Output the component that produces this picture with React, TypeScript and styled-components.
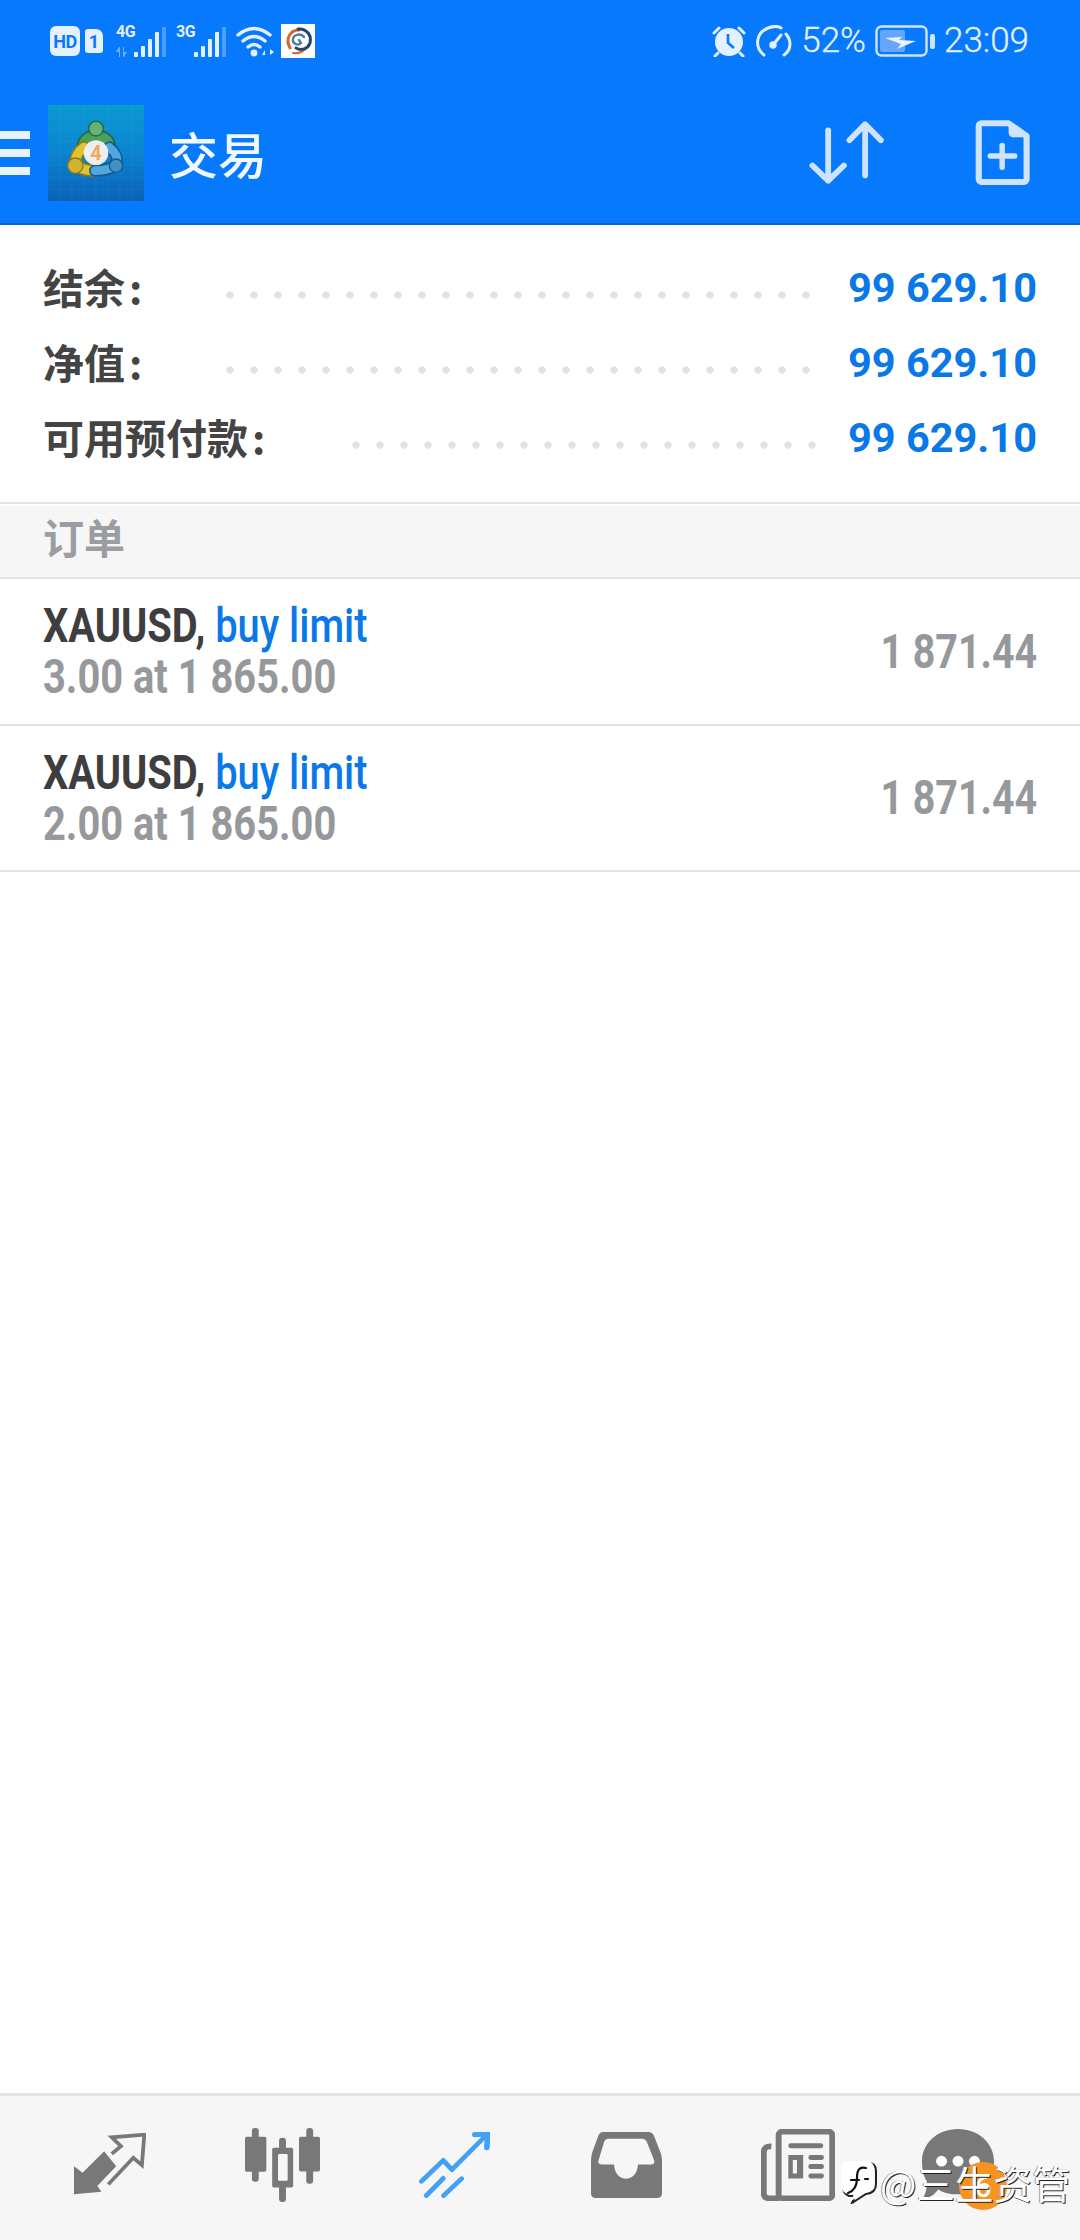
import React from "react";
import styled, { createGlobalStyle } from "styled-components";

const GlobalStyle = createGlobalStyle`
  html, body {
    margin: 0;
    padding: 0;
    background: #fff;
  }
  body {
    font-family: Roboto, "Noto Sans CJK SC", sans-serif;
  }
`;

const Page = styled.div`
  position: relative;
  width: 1080px;
  height: 2240px;
  display: flex;
  flex-direction: column;
  overflow: hidden;
  background: #fff;
`;

const Header = styled.header`
  background: #0679fd;
  border-bottom: 2px solid #0a66cc;
  height: 223px;
  flex: none;
`;

const StatusBar = styled.div`
  height: 82px;
  display: flex;
  align-items: center;
  justify-content: space-between;
  padding: 0 51px 0 50px;
`;

const StatusGroup = styled.div<{ $gap: number; $indent?: number }>`
  display: flex;
  align-items: center;
  gap: ${(p) => p.$gap}px;
  margin-left: ${(p) => p.$indent ?? 0}px;
`;

const HdBadge = styled.span`
  width: 30px;
  height: 30px;
  border-radius: 6px;
  background: #e5f0ff;
  color: #0679fd;
  font-size: 18px;
  font-weight: 700;
  display: flex;
  align-items: center;
  justify-content: center;
  letter-spacing: -0.5px;
`;

const SimBadge = styled.span`
  width: 18px;
  height: 24px;
  border-radius: 3px 7px 3px 3px;
  background: #e5f0ff;
  color: #0679fd;
  font-size: 18px;
  font-weight: 700;
  display: flex;
  align-items: center;
  justify-content: center;
`;

const SignalBox = styled.div`
  position: relative;
  width: 50px;
  height: 32px;
  display: flex;
  align-items: flex-end;
  justify-content: flex-end;
  gap: 3px;
`;

const NetLabel = styled.span`
  position: absolute;
  left: 0;
  top: -1px;
  color: #e5f0ff;
  font-size: 16px;
  line-height: 16px;
  font-weight: 700;
  letter-spacing: -0.4px;
`;

const NetArrows = styled.svg`
  position: absolute;
  left: 0;
  bottom: 0;
`;

const SignalBar = styled.i<{ $h: number; $dim?: boolean }>`
  display: block;
  width: 4px;
  height: ${(p) => p.$h}px;
  background: ${(p) => (p.$dim ? "#4c9dfc" : "#e5f0ff")};
  border-radius: 1px;
`;

const AppBadge = styled.span`
  width: 34px;
  height: 34px;
  background: #fff;
  display: block;
`;

const StatusText = styled.span`
  color: #e5f0ff;
  font-size: 35px;
  line-height: 36px;
  font-weight: 300;
  -webkit-text-stroke: 0.3px #e5f0ff;
`;

const Toolbar = styled.div`
  height: 141px;
  display: flex;
  align-items: center;
`;

const Burger = styled.div`
  width: 30px;
  display: flex;
  flex-direction: column;
  gap: 10px;
  margin-right: 18px;
`;

const BurgerLine = styled.i`
  display: block;
  height: 8px;
  background: #e8f3ff;
`;

const Title = styled.h1`
  margin: 0 0 0 25px;
  color: #f2f8ff;
  font-size: 49px;
  font-weight: 500;
  font-family: "Noto Sans CJK SC", sans-serif;
  line-height: 60px;
  flex: 1;
`;

const ToolIcons = styled.div`
  display: flex;
  align-items: center;
  gap: 90px;
  padding-right: 50px;
`;

const Summary = styled.section`
  padding: 24px 0 28px;
  flex: none;
`;

const SummaryRow = styled.div`
  height: 75px;
  display: flex;
  align-items: center;
  padding: 0 43px;
`;

const SummaryLabel = styled.span`
  font-family: "Noto Sans CJK SC", sans-serif;
  font-size: 41px;
  font-weight: 700;
  color: #444;
  line-height: 50px;
  white-space: nowrap;
  margin-bottom: 2px;
`;

const Colon = styled.span`
  margin-left: 4px;
`;

const Leader = styled.span<{ $dots: number; $lead: number }>`
  flex: none;
  width: ${(p) => p.$dots * 24}px;
  height: 8px;
  margin: 16px auto 0 ${(p) => p.$lead}px;
  background-image: radial-gradient(circle at 4px 4px, #e2e2e2 3.4px, transparent 4px);
  background-size: 24px 8px;
  background-repeat: repeat-x;
`;

const SummaryValue = styled.span`
  font-size: 41.5px;
  font-weight: 700;
  color: #0a78e6;
  line-height: 50px;
  white-space: nowrap;
  margin-top: 2px;
`;

const SectionHead = styled.div`
  flex: none;
  height: 77px;
  box-sizing: border-box;
  border-top: 2px solid #e4e4e4;
  border-bottom: 2px solid #e4e4e4;
  box-shadow: inset 0 2px 0 #fff;
  background: #f6f6f6;
  padding: 0 43px 10px;
  display: flex;
  align-items: center;
  font-family: "Noto Sans CJK SC", sans-serif;
  font-size: 41px;
  font-weight: 700;
  color: #9a9da1;
`;

const OrderRow = styled.div`
  flex: none;
  height: 144.5px;
  border-bottom: 2px solid #e4e4e4;
  padding: 0 43px;
  display: flex;
  align-items: center;
  justify-content: space-between;
`;

const OrderInfo = styled.div`
  display: flex;
  flex-direction: column;
`;

const CondensedLine = styled.div<{ $muted?: boolean }>`
  font-size: 48px;
  line-height: 51px;
  height: 51px;
  font-weight: 700;
  white-space: nowrap;
  transform: scaleX(0.83);
  transform-origin: left center;
  color: ${(p) => (p.$muted ? "#96989c" : "#3e3e40")};
`;

const OrderType = styled.span`
  color: #0a78e6;
  font-weight: 500;
`;

const OrderPrice = styled.div`
  font-size: 48px;
  font-weight: 700;
  color: #96989c;
  white-space: nowrap;
  transform: scaleX(0.82);
  transform-origin: right center;
`;

const Spacer = styled.div`
  flex: 1;
`;

const BottomNav = styled.nav`
  flex: none;
  height: 147px;
  border-top: 3px solid #e4e4e4;
  background: #f6f6f6;
  box-sizing: border-box;
  display: grid;
  grid-template-columns: repeat(5, 172px) 148px;
  padding: 0 0 7px 24px;
`;

const NavItem = styled.div`
  position: relative;
  display: flex;
  align-items: center;
  justify-content: center;
`;

const Badge = styled.span`
  position: absolute;
  left: 75px;
  top: 66px;
  width: 48px;
  height: 48px;
  border-radius: 50%;
  background: #f7931e;
  color: #fff;
  font-size: 30px;
  font-weight: 500;
  display: flex;
  align-items: center;
  justify-content: center;
`;

const Watermark = styled.div`
  position: absolute;
  left: 840px;
  top: 2158px;
  display: flex;
  align-items: center;
  gap: 2px;
  color: #fff;
  font-family: "Noto Sans CJK SC", sans-serif;
  font-size: 38.5px;
  line-height: 48px;
  text-shadow: 1px 1px 0 #222, -1px 0 0 #999;
  white-space: nowrap;
`;

const gray = "#787878";
const pale = "#cfe3ff";

const SignalGroup = ({ label, arrows }: { label: string; arrows?: boolean }) => (
  <SignalBox>
    <NetLabel>{label}</NetLabel>
    {arrows && (
      <NetArrows width="16" height="10" viewBox="0 0 16 10" fill="#6fb0fd">
        <path d="M0 5 L3 0 H4 V10 H3 V5 Z M7 0 H8 V5 L11 5 L8 10 H7 Z" />
      </NetArrows>
    )}
    <SignalBar $h={5} />
    <SignalBar $h={11} />
    <SignalBar $h={18} />
    <SignalBar $h={25} />
    <SignalBar $h={30} $dim />
  </SignalBox>
);

const WifiIcon = () => (
  <svg width="40" height="32" viewBox="0 0 40 32" fill="none" stroke="#e5f0ff" strokeLinecap="round">
    <path d="M2 10 Q18 -3 34 10" strokeWidth="3.4" />
    <path d="M7 16 Q18 7 29 16" strokeWidth="3.4" />
    <path d="M12 22 Q18 17 24 22" strokeWidth="3.4" />
    <circle cx="18" cy="28" r="3.4" fill="#e5f0ff" stroke="none" />
    <path d="M29 30 L29 25 L26 30 Z M34 24 L34 30 L38 27 Z" fill="#e5f0ff" stroke="none" />
  </svg>
);

const SwirlIcon = () => (
  <svg width="34" height="34" viewBox="0 0 34 34" fill="none" strokeLinecap="round" style={{ display: "block" }}>
    <path d="M9 24 C4 15 9 6 18 6" stroke="#d8662a" strokeWidth="3" />
    <path d="M12 29 C18 30 24 27 27 22" stroke="#d8662a" strokeWidth="2" />
    <path d="M17 5 C26 4 31 12 29 19 C27 25 20 27 15 24" stroke="#24456f" strokeWidth="3" />
    <path d="M23 13 C20 9 13 10 12 15 C11 20 17 22 20 19 L18 16" stroke="#4a7fa8" strokeWidth="2.4" />
  </svg>
);

const AlarmIcon = () => (
  <svg width="34" height="32" viewBox="0 0 34 32" fill="none">
    <circle cx="17" cy="17" r="14" fill="#e5f0ff" />
    <path d="M16 9 V18 L22 23" stroke="#0679fd" strokeWidth="2.6" />
    <path d="M2 8 L7 3 M32 8 L27 3 M6 28 L3 31 M28 28 L31 31" stroke="#e5f0ff" strokeWidth="3" strokeLinecap="round" />
  </svg>
);

const GaugeIcon = () => (
  <svg width="37" height="32" viewBox="0 0 37 32" fill="none" stroke="#e5f0ff" strokeWidth="3" strokeLinecap="round">
    <path d="M9 30 C-1 22 1 8 13 3 C18 1 23 1 26 3" />
    <path d="M31 9 C37 16 36 25 29 30" />
    <path d="M18 20 L26 10" />
    <circle cx="18" cy="20" r="2.2" fill="#e5f0ff" />
  </svg>
);

const BatteryIcon = () => (
  <svg width="60" height="32" viewBox="0 0 60 32" fill="none">
    <rect x="1.5" y="1.5" width="50" height="29" rx="5" stroke="#cfe3ff" strokeWidth="2.4" />
    <rect x="5" y="5" width="25" height="22" rx="2" fill="#64a6fb" />
    <path d="M10 13 L27 12 L24 15 L41 16 L22 24 L26 19 Z" fill="#eaf3ff" />
    <rect x="55" y="9" width="5" height="15" rx="2" fill="#cfe3ff" />
  </svg>
);

const SortIcon = () => (
  <svg width="76" height="63" viewBox="388 362 222 190" fill="none" preserveAspectRatio="none" stroke={pale} strokeWidth="17" strokeLinecap="round" strokeLinejoin="round">
    <path d="M444 390 V542 M398 496 L444 542 L490 496" />
    <path d="M552 526 V372 M506 420 L552 372 L598 420" />
  </svg>
);

const NewDocIcon = () => (
  <svg width="55" height="66" viewBox="885 360 162 198" fill="none" preserveAspectRatio="none">
    <path d="M896 378 a8 8 0 0 1 8 -8 H984 L1037 408 V538 a8 8 0 0 1 -8 8 H904 a8 8 0 0 1 -8 -8 Z" stroke={pale} strokeWidth="18" strokeLinejoin="round" />
    <path d="M984 368 L1046 412 H1000 a14 14 0 0 1 -16 -14 Z" fill={pale} />
    <path d="M965 436 V502 M930 468 H1002" stroke={pale} strokeWidth="16" strokeLinecap="round" />
  </svg>
);

const Mt4Logo = () => (
  <svg width="96" height="96" viewBox="144 315 288 288" fill="none" strokeLinecap="round" style={{ display: "block" }}>
    <defs>
      <linearGradient id="mtBg" x1="0" y1="0" x2="0" y2="1">
        <stop offset="0" stopColor="#0a9ad0" />
        <stop offset="0.5" stopColor="#0b83d2" />
        <stop offset="1" stopColor="#0a62b8" />
      </linearGradient>
    </defs>
    <rect x="144" y="315" width="288" height="288" fill="url(#mtBg)" />
    {[1, 2, 3, 4, 5, 6, 7].map((i) => (
      <g key={i} stroke="#ffffff" strokeOpacity="0.08" strokeWidth="2">
        <line x1={144 + i * 36} y1="315" x2={144 + i * 36} y2="603" />
        <line x1="144" y1={315 + i * 36} x2="432" y2={315 + i * 36} />
      </g>
    ))}
    <path d="M250 440 C250 398 326 398 328 440" stroke="#1d6a48" strokeWidth="40" />
    <path d="M250 440 C250 398 326 398 328 440" stroke="#4ba05e" strokeWidth="30" />
    <path d="M252 442 C215 470 215 512 285 512" stroke="#8f7a18" strokeWidth="38" />
    <path d="M252 442 C215 470 215 512 285 512" stroke="#e0c233" strokeWidth="28" />
    <path d="M328 442 C364 470 362 512 285 512" stroke="#155b8c" strokeWidth="36" />
    <path d="M328 442 C364 470 362 512 285 512" stroke="#4fa8de" strokeWidth="26" />
    <circle cx="288" cy="386" r="22" fill="#66b273" stroke="#1d6a48" strokeWidth="4" />
    <circle cx="226" cy="497" r="23" fill="#d2b42e" stroke="#8f7a18" strokeWidth="4" />
    <circle cx="348" cy="497" r="20" fill="#4090c2" stroke="#155b8c" strokeWidth="4" />
    <circle cx="288" cy="458" r="37" fill="#eceef0" />
    <text x="288" y="479" textAnchor="middle" fontSize="60" fontWeight="700" fill="#f0a860" fontFamily="Roboto, sans-serif">
      4
    </text>
  </svg>
);

const TradeIcon = () => (
  <svg width="72" height="63" viewBox="215 165 210 190" preserveAspectRatio="none" fill="none">
    <path d="M215 265 L215 350 L295 342 L283 325 L338 265 L303 220 L240 285 Z" fill={gray} strokeLinejoin="round" />
    <path d="M325 228 L352 205 L325 178 L420 170 L413 262 L388 240 L315 320" stroke={gray} strokeWidth="11" />
  </svg>
);

const CandlesIcon = () => (
  <svg width="75" height="74" viewBox="708 148 218 220" preserveAspectRatio="none">
    <rect x="728" y="148" width="20" height="160" rx="9" fill={gray} />
    <rect x="708" y="174" width="62" height="104" rx="5" fill={gray} />
    <rect x="807" y="177" width="20" height="191" rx="9" fill={gray} />
    <rect x="787" y="207" width="61" height="118" rx="5" fill={gray} />
    <rect x="804" y="225" width="28" height="80" rx="4" fill="#f6f6f6" />
    <rect x="886" y="148" width="20" height="166" rx="9" fill={gray} />
    <rect x="865" y="174" width="61" height="103" rx="5" fill={gray} />
  </svg>
);

const TrendIcon = () => (
  <svg width="71" height="66" viewBox="1215 155 205 198" preserveAspectRatio="none" fill="none" stroke="#42a0f5" strokeWidth="14" strokeLinecap="round" strokeLinejoin="round">
    <path d="M1222 303 L1285 240 L1310 268 L1404 170" />
    <path d="M1376 163 L1413 160 L1411 202" strokeWidth="16" />
    <path d="M1236 346 L1285 294 M1286 346 L1338 295" />
  </svg>
);

const InboxIcon = () => (
  <svg width="71" height="66" viewBox="148 155 207 199" preserveAspectRatio="none">
    <path
      fillRule="evenodd"
      fill={gray}
      d="M185 155 H315 Q328 155 333 170 L350 215 Q355 228 355 240 V340 Q355 354 342 354 H160 Q148 354 148 340 V240 Q148 228 152 215 L168 170 Q172 155 185 155 Z M198 175 Q190 175 187 183 L170 240 Q167 253 180 253 H215 C218 310 282 310 285 253 H322 Q336 253 332 240 L310 183 Q306 175 298 175 Z"
    />
  </svg>
);

const NewsIcon = () => (
  <svg width="74" height="72" viewBox="648 148 214 214" preserveAspectRatio="none" fill="none">
    <rect x="699" y="156" width="155" height="198" rx="10" stroke={gray} strokeWidth="17" />
    <path d="M678 200 Q656 198 656 218 V340 Q656 354 672 354 H700" stroke={gray} strokeWidth="17" />
    <rect x="727" y="190" width="101" height="15" rx="7" fill={gray} />
    <path fillRule="evenodd" fill={gray} d="M727 225 H770 V295 H727 Z M740 240 V280 H752 V240 Z" />
    <rect x="785" y="225" width="45" height="15" rx="7" fill={gray} />
    <rect x="785" y="252" width="45" height="15" rx="7" fill={gray} />
    <rect x="785" y="280" width="45" height="15" rx="7" fill={gray} />
  </svg>
);

const ChatIcon = () => (
  <svg width="72" height="71" viewBox="1108 148 210 214" preserveAspectRatio="none">
    <path d="M1213 148 C1272 148 1318 190 1318 245 C1318 300 1272 345 1213 345 C1190 345 1170 340 1155 330 C1145 345 1128 358 1108 360 C1120 345 1122 325 1122 305 C1112 290 1108 268 1108 245 C1108 190 1154 148 1213 148 Z" fill={gray} />
    <circle cx="1165" cy="245" r="16" fill="#fff" />
    <circle cx="1213" cy="245" r="16" fill="#fff" />
    <circle cx="1261" cy="245" r="16" fill="#fff" />
  </svg>
);

const WatermarkGlyph = () => (
  <svg width="38" height="44" viewBox="0 0 38 44" fill="none">
    <path d="M10 3 H28 Q36 3 36 11 V24 Q36 33 26 34 L12 43 L15 36 H9 Q3 34 3 26" stroke="#222" strokeWidth="2" />
    <path d="M8 1 H26 Q34 1 34 9 V23 Q34 32 24 33 L11 41 L14 34 H8 Q1 32 1 24 V9 Q1 1 8 1 Z" fill="#fff" />
    <path d="M26 8 C18 6 17 12 17 18 C17 27 14 31 8 33 M11 20 H19 M25 19 H28" stroke="#111" strokeWidth="2.2" strokeLinecap="round" />
  </svg>
);

const summary = [
  { label: "结余", value: "99 629.10", lead: 84, dots: 25 },
  { label: "净值", value: "99 629.10", lead: 84, dots: 25 },
  { label: "可用预付款", value: "99 629.10", lead: 87, dots: 20 },
];

const orders = [
  { symbol: "XAUUSD,", type: "buy limit", volume: "3.00 at 1 865.00", price: "1 871.44" },
  { symbol: "XAUUSD,", type: "buy limit", volume: "2.00 at 1 865.00", price: "1 871.44" },
];

export default function App() {
  return (
    <Page>
      <GlobalStyle />
      <Header>
        <StatusBar>
          <StatusGroup $gap={5}>
            <HdBadge>HD</HdBadge>
            <SimBadge>1</SimBadge>
            <StatusGroup $gap={10} $indent={8}>
              <SignalGroup label="4G" arrows />
              <SignalGroup label="3G" />
              <WifiIcon />
            </StatusGroup>
            <AppBadge>
              <SwirlIcon />
            </AppBadge>
          </StatusGroup>
          <StatusGroup $gap={9}>
            <AlarmIcon />
            <GaugeIcon />
            <StatusText>52%</StatusText>
            <BatteryIcon />
            <StatusText>23:09</StatusText>
          </StatusGroup>
        </StatusBar>
        <Toolbar>
          <Burger>
            <BurgerLine />
            <BurgerLine />
            <BurgerLine />
          </Burger>
          <Mt4Logo />
          <Title>交易</Title>
          <ToolIcons>
            <SortIcon />
            <NewDocIcon />
          </ToolIcons>
        </Toolbar>
      </Header>

      <Summary>
        {summary.map((row) => (
          <SummaryRow key={row.label}>
            <SummaryLabel>
              {row.label}
              <Colon>:</Colon>
            </SummaryLabel>
            <Leader $lead={row.lead} $dots={row.dots} />
            <SummaryValue>{row.value}</SummaryValue>
          </SummaryRow>
        ))}
      </Summary>

      <SectionHead>订单</SectionHead>

      {orders.map((order) => (
        <OrderRow key={order.volume}>
          <OrderInfo>
            <CondensedLine>
              {order.symbol} <OrderType>{order.type}</OrderType>
            </CondensedLine>
            <CondensedLine $muted>{order.volume}</CondensedLine>
          </OrderInfo>
          <OrderPrice>{order.price}</OrderPrice>
        </OrderRow>
      ))}

      <Spacer />

      <BottomNav>
        <NavItem>
          <TradeIcon />
        </NavItem>
        <NavItem>
          <CandlesIcon />
        </NavItem>
        <NavItem>
          <TrendIcon />
        </NavItem>
        <NavItem>
          <InboxIcon />
        </NavItem>
        <NavItem>
          <NewsIcon />
        </NavItem>
        <NavItem>
          <ChatIcon />
          <Badge>6</Badge>
        </NavItem>
      </BottomNav>

      <Watermark>
        <WatermarkGlyph />
        <span>@三生资管</span>
      </Watermark>
    </Page>
  );
}
